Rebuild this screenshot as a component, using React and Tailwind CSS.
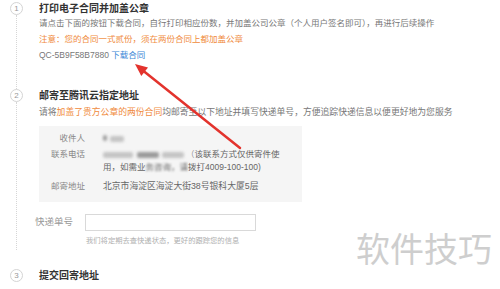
import React from 'react';

const FONT = { fontFamily: '"Liberation Sans", "Noto Sans CJK SC", sans-serif' };

function StepCircle({ n }) {
    return (
        <div className="flex h-[13px] w-[13px] shrink-0 items-center justify-center rounded-full border border-[#d4d4d4] bg-white text-[8px] leading-none text-[#999]">
            {n}
        </div>
    );
}

function Blob({ w, dark }) {
    return (
        <span
            className={
                'inline-block h-[6px] align-middle rounded-[2px] blur-[1.5px] ' +
                (dark ? 'bg-[#9a9a9a]' : 'bg-[#c4c4c4]')
            }
            style={{ width: w }}
        />
    );
}

export default function App() {
    return (
        <div className="relative h-[289px] w-[500px] overflow-hidden bg-white" style={FONT}>
            {/* Step 1 */}
            <div className="flex pl-[10px]">
                <div className="flex w-[13px] flex-col items-center pt-[2px]">
                    <StepCircle n="1" />
                    <div className="w-0 flex-1 border-l border-dotted border-[#d6d6d6]" />
                </div>
                <div className="ml-[16px] flex-1 pb-[26px]">
                    <div className="mt-[2px] text-[10px] font-semibold leading-[13px] text-[#333]">打印电子合同并加盖公章</div>
                    <div className="whitespace-nowrap text-[8.5px] leading-[16px] text-[#777]">
                        请点击下面的按钮下载合同，自行打印相应份数，并加盖公司公章（个人用户签名即可），再进行后续操作
                    </div>
                    <div className="text-[8.5px] leading-[16px] text-[#f08a3c]">注意：您的合同一式贰份，须在两份合同上都加盖公章</div>
                    <div className="text-[8.5px] leading-[16px] text-[#777]">
                        QC-5B9F58B7880 <span className="text-[#3a85d6]">下载合同</span>
                    </div>
                </div>
            </div>

            {/* Step 2 */}
            <div className="flex pl-[10px]">
                <div className="flex w-[13px] flex-col items-center">
                    <StepCircle n="2" />
                    <div className="w-0 flex-1 border-l border-dotted border-[#d6d6d6]" />
                </div>
                <div className="ml-[16px] flex-1">
                    <div className="text-[10px] font-semibold leading-[13px] text-[#333]">邮寄至腾讯云指定地址</div>
                    <div className="mt-[2px] whitespace-nowrap text-[8.8px] leading-[16px] text-[#777]">
                        请将<span className="text-[#f08a3c]">加盖了贵方公章的两份合同</span>均邮寄至以下地址并填写快递单号，方便追踪快递信息以便更好地为您服务
                    </div>

                    <div className="mt-[6px] w-[263px] bg-[#f5f5f5] pb-[9px] pt-[5px] text-[8.5px] text-[#888]">
                        <div className="flex leading-[14px]">
                            <div className="w-[46px] text-right">收件人</div>
                            <div className="ml-[18px] flex items-center">
                                <Blob w={4} dark />
                                <span className="ml-[3px]"><Blob w={14} /></span>
                            </div>
                        </div>
                        <div className="mt-[3px] flex leading-[13px]">
                            <div className="w-[46px] text-right">联系电话</div>
                            <div className="ml-[18px] whitespace-nowrap text-[#666]">
                                <div className="flex items-center">
                                    <Blob w={30} />
                                    <span className="ml-[4px]"><Blob w={22} dark /></span>
                                    <span className="ml-[3px]"><Blob w={22} /></span>
                                    <span className="ml-[2px] text-[#999]">（</span>
                                    <span>该联系方式仅供寄件使</span>
                                </div>
                                <div>
                                    用，如需业<span className="blur-[0.8px]">务咨询，请</span>拨打4009-100-100)
                                </div>
                            </div>
                        </div>
                        <div className="mt-[5px] flex leading-[14px]">
                            <div className="w-[46px] text-right">邮寄地址</div>
                            <div className="ml-[18px] whitespace-nowrap text-[8.8px] text-[#666]">北京市海淀区海淀大街38号银科大厦5层</div>
                        </div>
                    </div>

                    <div className="mt-[12px] flex items-center">
                        <div className="-ml-[4px] w-[40px] text-[9.5px] text-[#999]">快递单号</div>
                        <div className="ml-[10px] h-[17px] w-[171px] border border-[#d9d9d9] bg-white" />
                    </div>
                    <div className="ml-[47px] mt-[4px] pb-[3px] text-[7.3px] leading-[12px] text-[#b0b0b0]">
                        我们将定期去查快递状态，更好的跟踪您的信息
                    </div>
                </div>
            </div>

            {/* Step 3 */}
            <div className="mt-[19px] flex pl-[10px]">
                <div className="flex w-[13px] flex-col items-center">
                    <StepCircle n="3" />
                </div>
                <div className="ml-[16px] flex-1">
                    <div className="text-[10px] font-semibold leading-[13px] text-[#333]">提交回寄地址</div>
                </div>
            </div>

            {/* Watermark */}
            <div className="absolute left-[356px] top-[233px] text-[34px] leading-none text-[#cecece]">软件技巧</div>

            {/* Red annotation arrow */}
            <svg className="absolute left-0 top-0" width="500" height="289" viewBox="0 0 500 289">
                <line x1="240" y1="148" x2="141" y2="69" stroke="#e3332d" strokeWidth="2.5" strokeLinecap="round" />
                <polygon points="135,64 148,67.6 141.3,76" fill="#e3332d" />
            </svg>
        </div>
    );
}
